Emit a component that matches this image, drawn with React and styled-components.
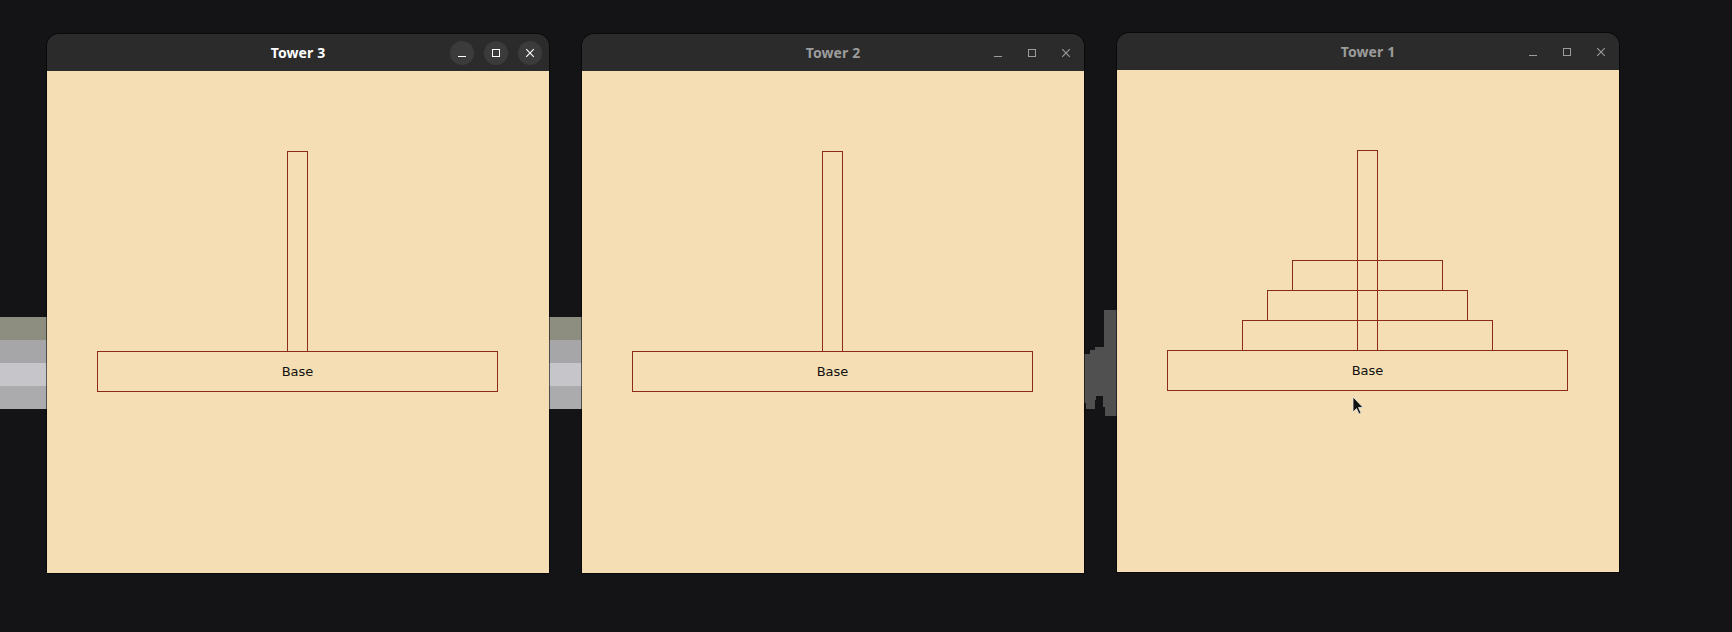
import React from "react";
import styled, { createGlobalStyle } from "styled-components";

const Global = createGlobalStyle`
  html, body { margin: 0; padding: 0; background: #141417; }
  body { width: 1732px; height: 632px; overflow: hidden; font-family: "DejaVu Sans", sans-serif; }
`;

const Desktop = styled.main`
  position: relative;
  width: 1732px;
  height: 632px;
  box-sizing: border-box;
  padding: 34px 0 0 47px;
  background: #141417;
  display: flex;
  align-items: flex-start;
  gap: 33px;
`;

const Stripes = styled.div`
  position: absolute;
  left: 0;
  top: 317px;
  width: 582px;
  height: 92px;
  z-index: 0;
  background: linear-gradient(
    to bottom,
    #8e8e80 0 23px,
    #a6a6a8 23px 46px,
    #c6c6ca 46px 69px,
    #ababad 69px 92px
  );
`;

const Critter = styled.svg`
  position: absolute;
  left: 1084px;
  top: 310px;
  z-index: 0;
`;

const Window = styled.section`
  position: relative;
  z-index: 1;
  width: 502px;
  margin-top: ${(p) => (p.$raised ? "-1px" : "0")};
  display: flex;
  flex-direction: column;
  border-radius: 12px 12px 0 0;
  overflow: hidden;
  box-shadow: 0 0 0 1px rgba(0, 0, 0, 0.55);
`;

const TitleBar = styled.header`
  height: 37px;
  background: #2b2b2b;
  display: grid;
  grid-template-columns: 1fr auto 1fr;
  align-items: center;
`;

const Title = styled.h1`
  grid-column: 2;
  margin: 0;
  font-family: "Noto Sans", "DejaVu Sans", sans-serif;
  font-weight: 700;
  font-size: 14px;
  letter-spacing: 0.1px;
  color: ${(p) => (p.$active ? "#ffffff" : "#9c9c9c")};
`;

const Controls = styled.div`
  grid-column: 3;
  justify-self: end;
  display: flex;
  align-items: center;
  gap: 10px;
  padding-right: ${(p) => (p.$active ? "7px" : "6px")};
`;

const CtrlButton = styled.button`
  width: 24px;
  height: 24px;
  padding: 0;
  border: none;
  border-radius: 50%;
  background: ${(p) => (p.$active ? "#3b3b3b" : "transparent")};
  color: ${(p) => (p.$active ? "#ffffff" : "#9c9c9c")};
  display: flex;
  align-items: center;
  justify-content: center;
`;

const Canvas = styled.div`
  height: 502px;
  background: #f5deb3;
`;

const LINE = "#8b2a18";

function Icon({ kind }) {
  return (
    <svg width="10" height="10" viewBox="0 0 10 10" fill="none" stroke="currentColor" strokeWidth="1">
      {kind === "min" && <line x1="1" y1="8.5" x2="9" y2="8.5" />}
      {kind === "max" && <rect x="1.5" y="1.5" width="7" height="7" />}
      {kind === "close" && (
        <g strokeWidth="1.1">
          <line x1="1.2" y1="1.2" x2="8.8" y2="8.8" />
          <line x1="8.8" y1="1.2" x2="1.2" y2="8.8" />
        </g>
      )}
    </svg>
  );
}

function Tower({ disks, cursor }) {
  return (
    <svg width="502" height="502" viewBox="0 0 502 502">
      <rect x="240.5" y="80.5" width="20" height="200" fill="none" stroke={LINE} />
      {disks.map((w, i) => (
        <rect
          key={i}
          x={250 - w / 2 + 0.5}
          y={250 - i * 30 + 0.5}
          width={w}
          height="30"
          fill="none"
          stroke={LINE}
        />
      ))}
      <rect x="50.5" y="280.5" width="400" height="40" fill="none" stroke={LINE} />
      <text
        x="250.5"
        y="300.5"
        textAnchor="middle"
        dominantBaseline="central"
        fontFamily="'DejaVu Sans', sans-serif"
        fontSize="13"
        fill="#111"
      >
        Base
      </text>
      {cursor && (
        <path
          d="M236 327 L236 342 L239.5 338.5 L242 344 L244 343 L241.5 337.5 L246 337.5 Z"
          fill="#111"
          stroke="#e8e8e8"
          strokeWidth="0.8"
        />
      )}
    </svg>
  );
}

function TkWindow({ title, active, raised, disks, cursor }) {
  return (
    <Window $raised={raised}>
      <TitleBar>
        <Title $active={active}>{title}</Title>
        <Controls $active={active}>
          <CtrlButton $active={active} aria-label="Minimize"><Icon kind="min" /></CtrlButton>
          <CtrlButton $active={active} aria-label="Maximize"><Icon kind="max" /></CtrlButton>
          <CtrlButton $active={active} aria-label="Close"><Icon kind="close" /></CtrlButton>
        </Controls>
      </TitleBar>
      <Canvas>
        <Tower disks={disks} cursor={cursor} />
      </Canvas>
    </Window>
  );
}

export default function App() {
  return (
    <>
      <Global />
      <Desktop>
        <Stripes />
        <Critter width="34" height="108" viewBox="0 0 34 108">
          <path
            d="M20 0 H34 V106 H21 V97 H19 V86 H12 V90 H11 V99 H2 V93 H0 V44 H6 V40 H11 V37 H20 Z"
            fill="#505050"
          />
        </Critter>
        <TkWindow title="Tower 3" active disks={[]} />
        <TkWindow title="Tower 2" disks={[]} />
        <TkWindow title="Tower 1" raised disks={[250, 200, 150]} cursor />
      </Desktop>
    </>
  );
}
